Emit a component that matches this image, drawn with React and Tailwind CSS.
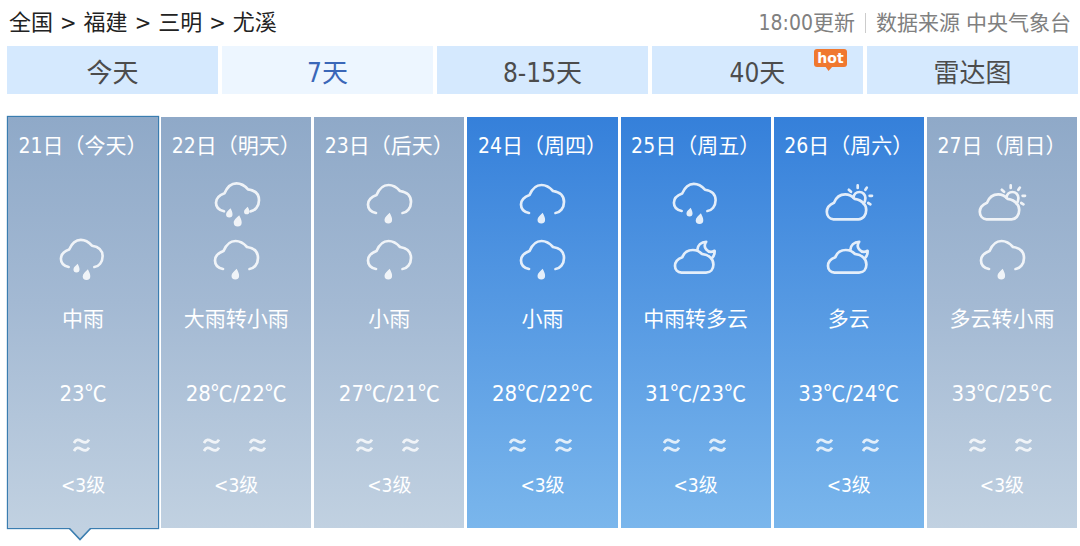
import { useState } from 'react';
import clsx from 'clsx';

const crumbs = ['全国', '福建', '三明', '尤溪'];

const tabs = [
  { id: 'today', label: '今天' },
  { id: '7d', label: '7天' },
  { id: '15d', label: '8-15天' },
  { id: '40d', label: '40天', hot: true },
  { id: 'radar', label: '雷达图' },
];

const days = [
  { date: '21日（今天）', icons: [null, 'moderate'], text: '中雨', temps: [23], today: true },
  { date: '22日（明天）', icons: ['heavy', 'light'], text: '大雨转小雨', temps: [28, 22] },
  { date: '23日（后天）', icons: ['light', 'light'], text: '小雨', temps: [27, 21] },
  { date: '24日（周四）', icons: ['light', 'light'], text: '小雨', temps: [28, 22], blue: true },
  { date: '25日（周五）', icons: ['moderate', 'night'], text: '中雨转多云', temps: [31, 23], blue: true },
  { date: '26日（周六）', icons: ['day', 'night'], text: '多云', temps: [33, 24], blue: true },
  { date: '27日（周日）', icons: ['day', 'light'], text: '多云转小雨', temps: [33, 25] },
];

const OPEN_CLOUD = 'M11 32 C6 31 3 28 3 23.5 C3 19 6 16 11.5 14 C14 8 18 4 23.5 4 C28 4 31.5 6 35 10 C42 11 46 15 46 21 C46 27 42 31.5 37.5 32';
const DROP = 'M1.4 -5.8 C2.8 -3.2 3.8 -1 3.8 1.2 A3.8 3.8 0 0 1 -3.8 1.2 C-3.8 -1.4 -1 -3.4 1.4 -5.8Z';

function Drop({ x, y, size = 1 }) {
  return <path d={DROP} transform={`translate(${x} ${y}) scale(${size})`} fill="currentColor" stroke="none" />;
}

const shapes = {
  light: (
    <>
      <path d={OPEN_CLOUD} />
      <Drop x={23.3} y={37.6} />
    </>
  ),
  moderate: (
    <>
      <path d={OPEN_CLOUD} transform="translate(-1 -1) scale(.97)" />
      <Drop x={17.5} y={31.5} size={0.8} />
      <Drop x={27.5} y={38} />
    </>
  ),
  heavy: (
    <>
      <path d={OPEN_CLOUD} transform="translate(1 -1.7)" />
      <Drop x={17.3} y={32.3} size={0.85} />
      <Drop x={25.7} y={40.3} size={1.05} />
      <Drop x={34.7} y={29.8} size={0.7} />
    </>
  ),
  day: (
    <>
      <path d="M8.5 38.3 C4.5 38 1.8 34.8 1.8 30.7 C1.8 26 4.5 23.6 9 21.7 C11 16.5 15 13.3 20.2 13.3 C24 13.3 27 14.8 29.6 17.8 C33.5 18.3 36.8 20 38.6 22.6 C40.6 24.4 41.2 26.6 41.2 29 C41.2 34.4 38 38.3 33.5 38.3Z" />
      <path d="M28.4 16.6 C29 13.2 31.4 11 34.4 11 C37.8 11 40.4 13.7 40.4 17 C40.4 19.4 39.7 21.2 38.4 22.6" />
      <path d="M23.8 8.8 L26 10.8 M32.7 4.4 V7 M41.8 6.6 L40.4 8.8 M44.6 14.8 H47 M43.2 22 L45.4 23.4" />
    </>
  ),
  night: (
    <>
      <path d="M9.5 35.7 C5.6 35.4 3 32.6 3 29 C3 24.8 5.6 22 10.3 20.3 C12 15.8 16 13 20.8 13 C24.4 13 27.2 14.2 29.7 16.8 C33.6 17.2 36.6 18.6 38.4 20.6 C40.6 22.6 41.4 25 41.4 27.6 C41.4 32.4 38.4 35.7 34 35.7Z" />
      <path d="M25.4 12.6 C25.6 8.4 29 4.8 34.2 4.8 C32.4 7.2 32.6 10.4 34.2 12.4 C36.2 14.9 39.6 15.4 42.6 13.8 C42.8 16.8 41.8 19.4 39.8 21.4" />
    </>
  ),
};

function WeatherIcon({ type }) {
  if (!type) return <div className="h-12 w-12" />;
  return (
    <svg viewBox="0 0 48 48" className="h-12 w-12 overflow-visible text-white opacity-85" fill="none" stroke="currentColor" strokeWidth="2.7" strokeLinecap="round" strokeLinejoin="round" aria-hidden="true">
      {shapes[type]}
    </svg>
  );
}

function WindIcon() {
  return (
    <svg viewBox="0 0 20 16" className="h-4 w-5 opacity-80" fill="none" stroke="white" strokeWidth="2.8" aria-hidden="true">
      <path d="M1 6 C3 2 5.500 2.500 8.500 4.200 C11.500 5.900 14 6.200 16 2.600" />
      <path d="M1 14 C3 10 5.500 10.500 8.500 12.200 C11.500 13.900 14 14.200 16 10.600" />
    </svg>
  );
}

function HotBadge() {
  return (
    <span className="absolute top-[3px] right-4 flex h-[18px] w-[33px] items-center justify-center rounded-[3px] bg-[#f0782f] font-['DejaVu_Sans'] text-sm leading-none font-bold text-white">
      hot
      <svg viewBox="0 0 8 5" className="absolute top-[17px] left-[11px] h-[5px] w-2" fill="#f0782f" aria-hidden="true">
        <path d="M0 0 H8 L3.500 5Z" />
      </svg>
    </span>
  );
}

function DayCard({ day }) {
  return (
    <li
      className={clsx(
        'relative flex flex-col items-center bg-linear-to-b pt-[15px] pb-[29px] whitespace-nowrap text-white',
        day.blue ? 'from-[#3580da] to-[#7ab6ec]' : 'from-[#8fa9c8] via-[#a3b9d3] via-45% to-[#c1d1e1]',
        day.today && '-m-px border border-[#3a7db0] shadow-[0_0_1px_#3a7db0]'
      )}>
      <h2 className="text-[21px] leading-7">{day.date}</h2>
      <div className="mt-[21px] flex flex-col gap-2">
        {day.icons.map((type, i) => (
          <WeatherIcon key={i} type={type} />
        ))}
      </div>
      <p className="mt-5 text-[21px] leading-7">{day.text}</p>
      <p className="mt-[47px] h-7 text-[22px] leading-7">
        {day.temps.map((t, i) => (
          <span key={i}>
            {i > 0 && '/'}
            {t}
            <span className="font-['Noto_Sans_CJK_SC',sans-serif] leading-none">℃</span>
          </span>
        ))}
      </p>
      <div className="mt-[29px] flex gap-[26px]">
        {day.temps.map((_, i) => (
          <WindIcon key={i} />
        ))}
      </div>
      <p className="mt-[18px] text-[19px] leading-7">&lt;3级</p>

      {/* pointer under the selected day */}
      {day.today && (
        <svg viewBox="0 0 24 13" className="absolute top-full left-[60px] h-[13px] w-6" fill="#c1d1e1" aria-hidden="true">
          <path d="M1 0 L12 11.500 L23 0" stroke="#3a7db0" strokeWidth="1.6" />
        </svg>
      )}
    </li>
  );
}

export default function App() {
  const [active, setActive] = useState('7d');

  return (
    <main className="bg-white pr-[2px] pb-[18px] pl-[7px] font-['DejaVu_Sans_Condensed','Noto_Sans_CJK_SC',sans-serif]">
      <header className="flex h-[46px] items-center justify-between pr-[7px] pl-0.5 leading-7 whitespace-nowrap">
        <nav className="flex items-center gap-[7px] text-[22px] text-[#222]">
          {crumbs.map((name, i) => (
            <span key={name} className="flex items-center gap-[7px]">
              {i > 0 && <span>&gt;</span>}
              <a href="#">{name}</a>
            </span>
          ))}
        </nav>
        <div className="flex items-center text-[21px] text-[#808080]">
          <span>18:00更新</span>
          <span className="mx-[10px] h-5 w-px bg-[#ccc]" />
          <span>数据来源 中央气象台</span>
        </div>
      </header>

      <div className="grid grid-cols-5 gap-1">
        {tabs.map((tab) => (
          <button
            key={tab.id}
            type="button"
            onClick={() => setActive(tab.id)}
            className={clsx(
              'relative h-12 cursor-pointer pt-1.5 text-[26px] leading-none',
              active === tab.id ? 'bg-[#edf6ff] text-[#3a67b8]' : 'bg-[#d5e9fe] text-[#4c4c4c]'
            )}>
            {tab.label}
            {tab.hot && <HotBadge />}
          </button>
        ))}
      </div>

      <ul className="mt-[23px] grid grid-cols-7 gap-[3px] px-px">
        {days.map((day) => (
          <DayCard key={day.date} day={day} />
        ))}
      </ul>
    </main>
  );
}
